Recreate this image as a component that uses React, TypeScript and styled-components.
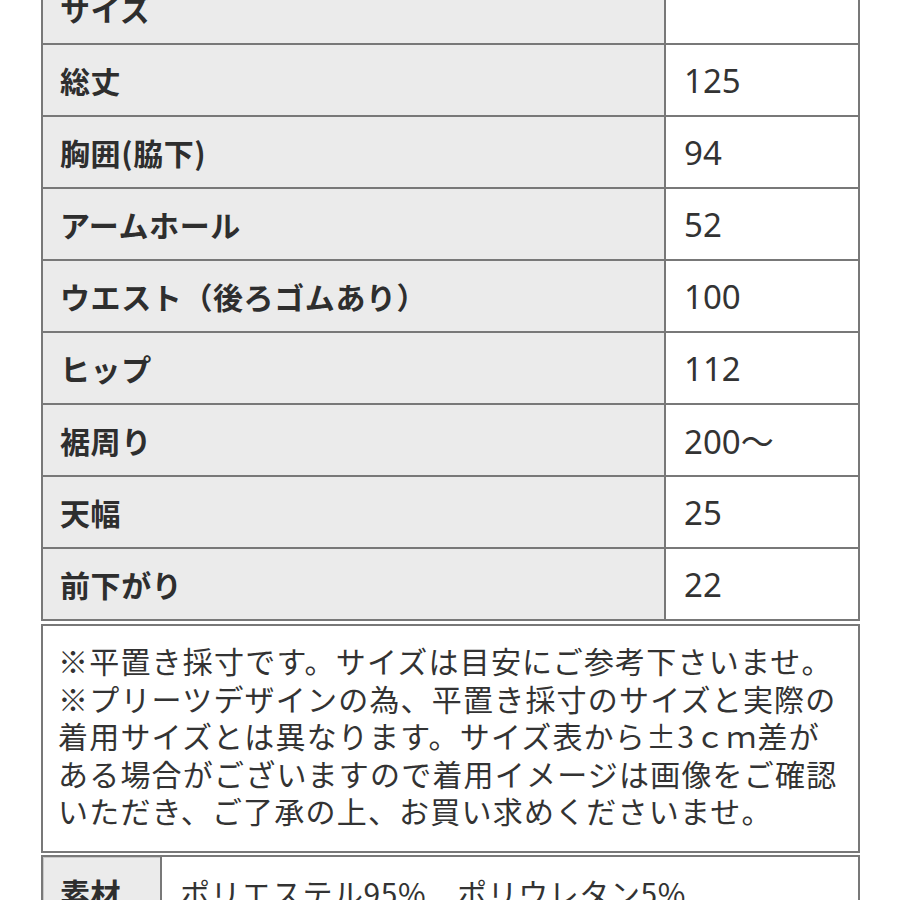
import React from "react";
import styled, { createGlobalStyle } from "styled-components";

interface SizeRow {
  label: string;
  value: string;
}

const rows: SizeRow[] = [
  { label: "サイズ", value: "" },
  { label: "総丈", value: "125" },
  { label: "胸囲(脇下)", value: "94" },
  { label: "アームホール", value: "52" },
  { label: "ウエスト（後ろゴムあり）", value: "100" },
  { label: "ヒップ", value: "112" },
  { label: "裾周り", value: "200〜" },
  { label: "天幅", value: "25" },
  { label: "前下がり", value: "22" },
];

const notes = [
  "※平置き採寸です。サイズは目安にご参考下さいませ。",
  "※プリーツデザインの為、平置き採寸のサイズと実際の",
  "着用サイズとは異なります。サイズ表から±3ｃｍ差が",
  "ある場合がございますので着用イメージは画像をご確認",
  "いただき、ご了承の上、お買い求めくださいませ。",
];

function App() {
  return (
    <>
      <GlobalStyle />
      <Page>
        <SizeTable>
          {rows.map(row => (
            <React.Fragment key={row.label}>
              <LabelCell>{row.label}</LabelCell>
              <ValueCell>{row.value}</ValueCell>
            </React.Fragment>
          ))}
        </SizeTable>
        <NoteBox>
          {notes.map(line => (
            <NoteLine key={line}>{line}</NoteLine>
          ))}
        </NoteBox>
        <MaterialTable>
          <MaterialLabel>素材</MaterialLabel>
          <MaterialValue>ポリエステル95%　ポリウレタン5%</MaterialValue>
        </MaterialTable>
      </Page>
    </>
  );
}

const GlobalStyle = createGlobalStyle`
  html, body {
    margin: 0;
    padding: 0;
    background: #fff;
    overflow: hidden;
  }
  body {
    font-family: "Noto Sans CJK JP", "Noto Sans", sans-serif;
    color: #333;
  }
`;

// 上端の「サイズ」行は画面外から始まる
const Page = styled.div`
  width: 819px;
  margin: -29px 0 0 41px;
  height: 929px;
  overflow: hidden;
`;

const borderColor = "#787878";

const SizeTable = styled.div`
  display: grid;
  grid-template-columns: 623px 1fr;
  border-top: 2px solid ${borderColor};
  border-left: 2px solid ${borderColor};
`;

const Cell = styled.div`
  height: 70px;
  display: flex;
  align-items: center;
  border-right: 2px solid ${borderColor};
  border-bottom: 2px solid ${borderColor};
  white-space: nowrap;
`;

const LabelCell = styled(Cell)`
  background: #ebebeb;
  padding-left: 17px;
  font-size: 30px;
  font-weight: 700;
  color: #2e2e2e;
  letter-spacing: 0.6px;
`;

const ValueCell = styled(Cell)`
  background: #fff;
  padding-left: 18px;
  font-family: "Noto Sans", "Noto Sans CJK JP", sans-serif;
  font-size: 33px;
  color: #333;
`;

const NoteBox = styled.div`
  margin-top: 3px;
  border: 2px solid ${borderColor};
  padding: 16px 0 21px 15px;
  box-sizing: border-box;
  height: 229px;
`;

const NoteLine = styled.div`
  font-size: 30px;
  line-height: 37.5px;
  letter-spacing: 1.2px;
  white-space: nowrap;
  color: #333;
`;

const MaterialTable = styled.div`
  margin-top: 2px;
  display: grid;
  grid-template-columns: 119px 1fr;
  border-top: 2px solid ${borderColor};
  border-left: 2px solid ${borderColor};
`;

const MaterialLabel = styled(LabelCell)`
  box-shadow: inset 1px 1px 0 #c8c8c8;
`;

const MaterialValue = styled(Cell)`
  background: #fff;
  padding-left: 18px;
  font-size: 30px;
  letter-spacing: 0.6px;
  color: #333;
`;

export default App;
